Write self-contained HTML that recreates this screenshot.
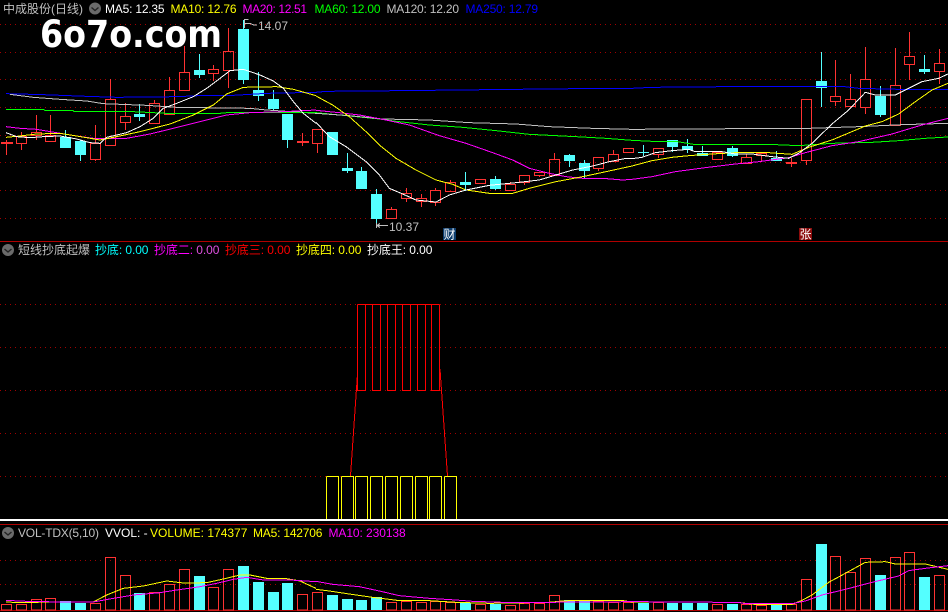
<!DOCTYPE html>
<html><head><meta charset="utf-8"><style>
html,body{margin:0;padding:0;background:#000;width:948px;height:612px;overflow:hidden}
svg{display:block;shape-rendering:crispEdges}
text{font-family:"Liberation Sans","WenQuanYi Zen Hei","Noto Sans CJK SC",sans-serif;font-size:12px}
.t{letter-spacing:-.2px}
.u{letter-spacing:-.08px}
polyline{fill:none;stroke-width:1;vector-effect:non-scaling-stroke}
.w{stroke:#fff}.y{stroke:#ff0}.m{stroke:#f0f}.g{stroke:#0f0}.s{stroke:#c0c0c0}.b{stroke:#00f}
</style></head><body>
<svg width="948" height="612" viewBox="0 0 948 612" xmlns="http://www.w3.org/2000/svg">
<rect width="948" height="612" fill="#000"/>
<!-- grid -->
<path d="M0 24.5H948M0 52.5H948M0 79.5H948M0 107.5H948M0 135.5H948M0 162.5H948M0 190.5H948M0 218.5H948M0 304.5H948M0 347.5H948M0 390.5H948M0 433.5H948M0 476.5H948M0 560.5H948M0 584.5H948" stroke="#a00000" stroke-width="1" stroke-dasharray="1 4" fill="none"/>
<path d="M0 241.5H948M0 524.5H948M0 610.5H948" stroke="#b00000" fill="none"/>
<!-- red candles -->
<path fill="none" stroke="#ff3232" d="M6.5 140V155M1 142.5h12M1 143.5h12
M21.5 132V136M21.5 143V150M16.5 136.5h10v7h-10z
M36.5 115V132M36.5 135V140M31.5 132.5h10v3h-10z
M50.5 115V135M45.5 135.5h10v6h-10z
M95.5 125V143M95.5 159V161M90.5 143.5h10v16h-10z
M110.5 79V99M105.5 99.5h10v46h-10z
M125.5 103V116M125.5 122V130M120.5 116.5h10v6h-10z
M154.5 100V103M149.5 103.5h10v20h-10z
M169.5 77V90M164.5 90.5h10v24h-10z
M184.5 46V72M179.5 72.5h10v18h-10z
M213.5 65V69M213.5 73V81M208.5 69.5h10v4h-10z
M228.5 28V51M228.5 70V88M223.5 51.5h10v19h-10z
M302.5 133V146M297 141.5h12M297 142.5h12
M317.5 143V153M312.5 129.5h10v14h-10z
M391.5 207V209M386.5 209.5h10v9h-10z
M406.5 188V193M406.5 198V202M401.5 193.5h10v5h-10z
M421.5 194V198M421.5 201V207M416.5 198.5h10v3h-10z
M435.5 188V190M435.5 202V206M430.5 190.5h10v12h-10z
M450.5 180V182M445.5 182.5h10v9h-10z
M475.5 179.5h10v4h-10z
M510.5 182V184M505.5 184.5h10v6h-10z
M524.5 182V185M519.5 175.5h10v7h-10z
M539.5 175V177M534.5 172.5h10v3h-10z
M554.5 153V159M549.5 159.5h10v16h-10z
M598.5 168V171M593.5 157.5h10v11h-10z
M613.5 150V154M608.5 154.5h10v7h-10z
M623.5 148.5h10v4h-10z
M658.5 154V158M653.5 148.5h10v6h-10z
M712.5 152.5h10v7h-10z
M746.5 154V157M741.5 157.5h10v6h-10z
M761.5 155V162M756.5 153.5h10v2h-10z
M791.5 158V167M786 162.5h11M786 163.5h11
M806.5 160V165M801.5 99.5h10v61h-10z
M835.5 60V96M835.5 101V106M830.5 96.5h10v5h-10z
M850.5 74V99M845.5 99.5h10v7h-10z
M865.5 47V79M865.5 107V114M860.5 79.5h10v28h-10z
M895.5 48V85M890.5 85.5h10v40h-10z
M909.5 32V56M909.5 64V80M904.5 56.5h10v8h-10z
M939.5 49V63M939.5 71V84M934.5 63.5h10v8h-10z"/>
<!-- cyan candles -->
<path fill="none" stroke="#54ffff" d="M65.5 130V148M80.5 140V161M139.5 104V121M199.5 54V78M243.5 20V84M258.5 72V101M273.5 90V111M287.5 114V148M332.5 132V155M347.5 153V173M361.5 167V189M376.5 189V227M465.5 172V191M495.5 176V190M569.5 154V167M584.5 160V178M643.5 145V156M638 152.5h11M672.5 140V152M687.5 139V153M702.5 146V156M732.5 146V157M776.5 151V161M821.5 52V107M880.5 86V117M924.5 55V74"/>
<path fill="#54ffff" d="M60 137h11v11h-11zM75 141h11v14h-11zM134 114h11v3h-11zM194 70h11v5h-11zM238 29h11v51h-11zM253 90h11v6h-11zM268 99h11v10h-11zM282 114h11v26h-11zM327 132h11v23h-11zM342 168h11v3h-11zM356 171h11v18h-11zM371 194h11v25h-11zM460 182h11v3h-11zM490 179h11v10h-11zM564 155h11v6h-11zM579 163h11v8h-11zM667 140h11v7h-11zM682 146h11v4h-11zM697 153h11v3h-11zM727 148h11v8h-11zM771 158h11v3h-11zM816 81h11v7h-11zM875 96h11v19h-11zM919 69h11v3h-11z"/>
<!-- MA lines main -->
<g transform="scale(.33333)">
<polyline class="b" points="18,281 130,284 260,289 350,292 530,290 620,286 700,286 800,280 948,277"/>
<polyline class="s" points="30,283 100,292 180,298 260,303 310,311 440,316 530,322 750,325 800,330 948,340"/>
<polyline class="g" points="18,328 130,328 135,331 218,331 222,335 400,335 500,340 660,340 680,338 948,338"/>
<polyline class="m" points="18,380 60,385 110,388 170,398 230,408 280,415 380,415 450,402 520,385 600,365 680,345 750,338 850,335 948,330"/>
<polyline class="y" points="18,412 60,408 110,402 180,400 230,408 300,420 350,410 420,395 510,372 580,345 640,315 680,282 730,262 830,260 880,268 948,287"/>
<polyline class="w" points="18,398 50,410 90,413 130,410 180,408 230,417 270,428 300,430 320,412 350,405 380,398 420,380 460,355 490,325 530,310 580,290 620,265 660,235 690,212 730,208 780,225 820,243 850,265 880,305 910,340 948,370"/>
</g>
<g transform="translate(316,0) scale(.33333)">
<polyline class="b" points="0,277 30,274 250,272 600,268 780,266 948,265"/>
<polyline class="g" points="0,338 190,357 240,364 340,375 440,382 540,392 640,403 780,410 870,415 948,421"/>
<polyline class="s" points="0,340 100,347 200,357 340,360 460,368 600,372 700,380 830,385 948,388"/>
<polyline class="m" points="0,331 70,338 130,345 200,358 280,375 370,407 450,430 530,458 590,480 640,505 700,520 750,530 800,535 860,535 920,540 948,538"/>
<polyline class="y" points="0,288 50,315 100,350 150,395 190,435 240,475 300,510 360,540 410,553 450,570 520,580 590,580 640,565 720,545 800,530 870,515 948,498"/>
<polyline class="w" points="0,367 40,410 90,440 150,485 190,525 220,565 260,582 300,600 360,606 400,585 450,570 520,556 600,548 670,540 730,522 770,510 830,498 880,485 930,475 948,475"/>
</g>
<g transform="translate(632,0) scale(.33333)">
<polyline class="b" points="0,265 60,262 280,260 630,259 680,265 800,268 948,268"/>
<polyline class="s" points="0,388 320,386 500,386 680,380 810,374 948,370"/>
<polyline class="g" points="0,421 60,424 130,424 190,434 320,434 410,433 500,437 600,430 720,427 800,422 880,415 948,411"/>
<polyline class="m" points="0,538 60,530 130,515 220,503 310,492 380,485 470,473 520,458 600,437 680,425 780,402 870,375 948,355"/>
<polyline class="y" points="0,498 60,482 120,472 170,467 240,462 310,458 410,458 480,463 530,442 600,420 700,378 750,365 800,342 850,305 900,270 948,250"/>
<polyline class="w" points="0,476 30,472 70,458 120,452 170,448 190,455 270,455 310,462 360,462 420,470 470,475 500,460 540,430 600,372 650,330 700,277 730,285 790,285 830,265 870,245 920,235 948,222"/>
</g>
<!-- high/low markers -->
<path fill="none" stroke="#c0c0c0" d="M244.5 19V28M244.5 19.5h4M244.5 23.5h6M250 23.5l4 1.5h3M376.5 223V228M377 225.5h11M377 225.5l3-2M377 225.5l3 2"/>
<text x="258" y="30" fill="#c0c0c0">14.07</text>
<text x="389" y="231" fill="#c0c0c0">10.37</text>
<rect x="443" y="228" width="13" height="12" fill="#0c3c6c"/>
<text x="443.5" y="238.5" fill="#fff">财</text>
<rect x="799" y="228" width="13" height="12" fill="#8c0c0c"/>
<text x="799.5" y="238.5" fill="#fff">张</text>
<!-- title 1 -->
<text x="3" y="13" fill="#c0c0c0">中成股份(日线)</text>
<circle cx="95" cy="8.5" r="6" fill="#6a6a6a" style="shape-rendering:auto"/>
<path d="M91.5 7.5l3.5 3 3.5-3" stroke="#222" stroke-width="1.4" fill="none" style="shape-rendering:auto"/>
<text class="t" x="105" y="13" fill="#fff">MA5: 12.35</text>
<text class="t" x="170.5" y="13" fill="#ff0">MA10: 12.76</text>
<text x="242.5" y="13" fill="#f0f" style="letter-spacing:-.35px">MA20: 12.51</text>
<text class="t" x="314.5" y="13" fill="#0f0">MA60: 12.00</text>
<text class="t" x="386.5" y="13" fill="#c0c0c0">MA120: 12.20</text>
<text class="t" x="465.5" y="13" fill="#00f">MA250: 12.79</text>
<!-- watermark -->
<text x="40" y="47" fill="#fff" textLength="182" lengthAdjust="spacingAndGlyphs" style='font-family:"DejaVu Sans",sans-serif;font-size:37px;font-weight:bold;shape-rendering:auto'>6o7o.com</text>
<!-- section 2 -->
<circle cx="8" cy="250" r="6" fill="#6a6a6a" style="shape-rendering:auto"/>
<path d="M4.5 249l3.5 3 3.5-3" stroke="#222" stroke-width="1.4" fill="none" style="shape-rendering:auto"/>
<text x="18" y="254" fill="#c0c0c0">短线抄底起爆</text>
<text class="u" x="95" y="254" fill="#0ff">抄底: 0.00</text>
<text class="u" x="154" y="254" fill="#f0f">抄底二: <tspan fill="#e050e0">0.00</tspan></text>
<text class="u" x="225" y="254" fill="#f00">抄底三: 0.00</text>
<text class="u" x="296" y="254" fill="#ff0">抄底四: 0.00</text>
<text class="u" x="367" y="254" fill="#fff">抄底王: 0.00</text>
<path fill="none" stroke="#f00" d="M350.5 476L357.5 374M447.5 476L440 369"/>
<path fill="none" stroke="#f00" d="M357.5 304.5H439.5M357.5 304.5V390.5h8V304.5M372.5 304.5V390.5h8V304.5M387.5 304.5V390.5h8V304.5M402.5 304.5V390.5h8V304.5M417.5 304.5V390.5h8V304.5M431.5 304.5V390.5h8V304.5"/>
<path fill="none" stroke="#ff0" d="M326.5 476.5h12V519M326.5 476.5V519M341.5 476.5h12V519M341.5 476.5V519M355.5 476.5h12V519M355.5 476.5V519M370.5 476.5h12V519M370.5 476.5V519M385.5 476.5h12V519M385.5 476.5V519M400.5 476.5h12V519M400.5 476.5V519M415.5 476.5h12V519M415.5 476.5V519M429.5 476.5h12V519M429.5 476.5V519M444.5 476.5h12V519M444.5 476.5V519"/>
<rect x="0" y="519" width="948" height="2" fill="#fff"/>
<!-- section 3 -->
<circle cx="8" cy="533" r="6" fill="#6a6a6a" style="shape-rendering:auto"/>
<path d="M4.5 532l3.5 3 3.5-3" stroke="#222" stroke-width="1.4" fill="none" style="shape-rendering:auto"/>
<text class="t" x="18" y="537" fill="#c0c0c0">VOL-TDX(5,10)</text>
<text x="105" y="537" fill="#fff">VVOL: -</text>
<text x="150" y="537" fill="#ff0">VOLUME: 174377</text>
<text class="t" x="253" y="537" fill="#ff0">MA5: 142706</text>
<text class="u" x="328.5" y="537" fill="#f0f">MA10: 230138</text>
<!-- volume bars -->
<path fill="none" stroke="#ff3232" d="M1.5 604.5h10V610h-10zM16.5 604.5h10V610h-10zM31.5 599.5h10V610h-10zM45.5 598.5h10V610h-10zM90.5 603.5h10V610h-10zM105.5 557.5h10V610h-10zM120.5 575.5h10V610h-10zM149.5 592.5h10V610h-10zM164.5 584.5h10V610h-10zM179.5 569.5h10V610h-10zM208.5 587.5h10V610h-10zM223.5 569.5h10V610h-10zM297.5 594.5h10V610h-10zM312.5 592.5h10V610h-10zM386.5 602.5h10V610h-10zM401.5 601.5h10V610h-10zM416.5 602.5h10V610h-10zM430.5 601.5h10V610h-10zM445.5 602.5h10V610h-10zM475.5 604.5h10V610h-10zM505.5 605.5h10V610h-10zM519.5 603.5h10V610h-10zM534.5 603.5h10V610h-10zM549.5 595.5h10V610h-10zM593.5 601.5h10V610h-10zM608.5 602.5h10V610h-10zM623.5 602.5h10V610h-10zM653.5 602.5h10V610h-10zM712.5 604.5h10V610h-10zM741.5 604.5h10V610h-10zM756.5 605.5h10V610h-10zM786.5 604.5h10V610h-10zM801.5 579.5h10V610h-10zM830.5 556.5h10V610h-10zM845.5 572.5h10V610h-10zM860.5 558.5h10V610h-10zM890.5 557.5h10V610h-10zM904.5 552.5h10V610h-10zM934.5 575.5h10V610h-10z"/>
<path fill="#54ffff" d="M60 601h11V610h-11zM75 603h11V610h-11zM134 593h11V610h-11zM194 576h11V610h-11zM238 566h11V610h-11zM253 582h11V610h-11zM268 592h11V610h-11zM282 583h11V610h-11zM327 595h11V610h-11zM342 599h11V610h-11zM356 600h11V610h-11zM371 597h11V610h-11zM460 603h11V610h-11zM490 604h11V610h-11zM564 600h11V610h-11zM579 600h11V610h-11zM638 603h11V610h-11zM667 603h11V610h-11zM682 603h11V610h-11zM697 603h11V610h-11zM727 604h11V610h-11zM771 605h11V610h-11zM816 544h11V610h-11zM875 575h11V610h-11zM919 577h11V610h-11z"/>
<!-- volume MA -->
<g transform="translate(0,520) scale(.33333)">
<polyline class="y" points="18,246 60,248 150,246 280,246 320,225 370,205 430,198 500,183 550,189 620,188 670,177 720,165 750,165 800,175 860,176 900,183 948,205"/>
<polyline class="m" points="18,241 100,245 280,246 340,235 400,225 480,218 530,210 600,200 650,190 700,178 740,172 790,180 870,180 948,185"/>
</g>
<g transform="translate(316,520) scale(.33333)">
<polyline class="y" points="0,208 40,213 100,222 170,232 220,238 250,242 340,242 420,247 520,250 640,248 690,248 740,243 780,241 915,241 948,246"/>
<polyline class="m" points="0,184 50,193 130,200 190,213 250,227 340,235 420,240 470,244 560,247 690,247 948,245"/>
</g>
<g transform="translate(632,520) scale(.33333)">
<polyline class="y" points="0,246 190,246 324,248 366,253 480,253 510,241 540,225 590,187 640,160 700,127 760,125 790,132 880,132 948,148"/>
<polyline class="m" points="0,245 190,246 324,248 340,251 480,251 520,243 570,225 640,208 720,187 800,168 830,152 880,145 948,137"/>
</g>
</svg>
</body></html>
